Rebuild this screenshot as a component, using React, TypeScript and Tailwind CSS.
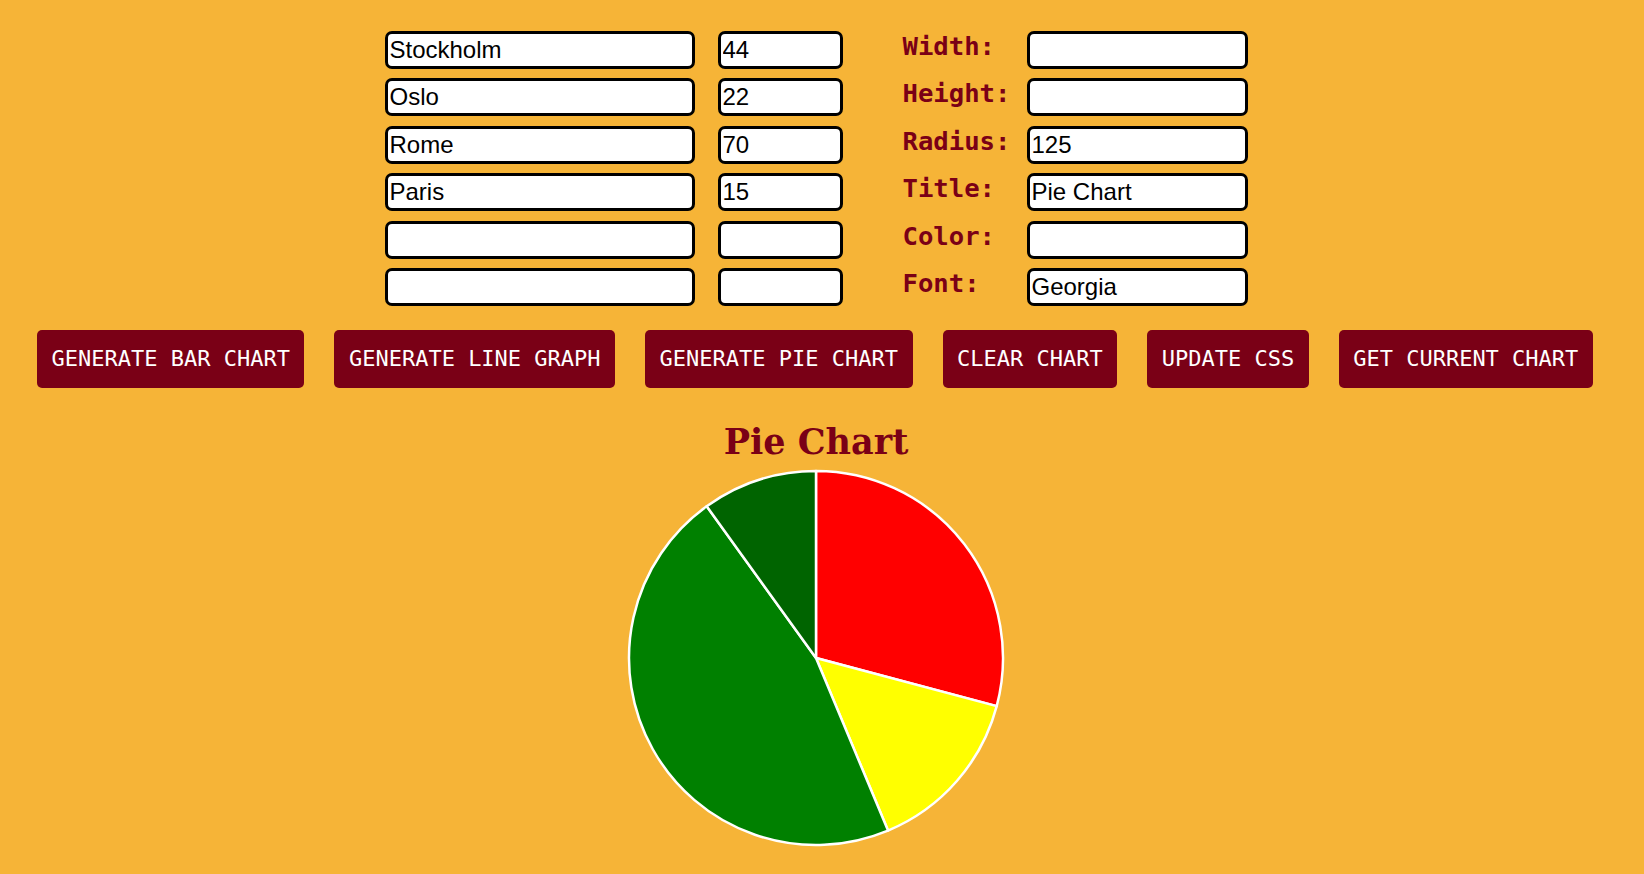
const rows = [
  { city: "Stockholm", value: "44" },
  { city: "Oslo", value: "22" },
  { city: "Rome", value: "70" },
  { city: "Paris", value: "15" },
  { city: "", value: "" },
  { city: "", value: "" },
];

const settings = [
  { label: "Width:", value: "" },
  { label: "Height:", value: "" },
  { label: "Radius:", value: "125" },
  { label: "Title:", value: "Pie Chart" },
  { label: "Color:", value: "" },
  { label: "Font:", value: "Georgia" },
];

const buttons = [
  "GENERATE BAR CHART",
  "GENERATE LINE GRAPH",
  "GENERATE PIE CHART",
  "CLEAR CHART",
  "UPDATE CSS",
  "GET CURRENT CHART",
];

const slices = [
  { value: 44, color: "#ff0000" },
  { value: 22, color: "#ffff00" },
  { value: 70, color: "#008000" },
  { value: 15, color: "#006400" },
];

const inputClass =
  "h-[38px] rounded-[7px] border-[3px] border-black bg-white px-[2px] text-[24px] text-black outline-none font-['Liberation_Sans',Arial,sans-serif]";

function PieChart() {
  const size = 380;
  const c = size / 2;
  const r = 187;
  const total = slices.reduce((s, x) => s + x.value, 0);
  let angle = 0;

  const point = (a: number) => {
    const rad = (a * Math.PI) / 180;
    return [c + r * Math.sin(rad), c - r * Math.cos(rad)];
  };

  return (
    <svg width={size} height={size} viewBox={`0 0 ${size} ${size}`}>
      {slices.map((s, i) => {
        const start = angle;
        const sweep = (s.value / total) * 360;
        angle += sweep;
        const [x1, y1] = point(start);
        const [x2, y2] = point(start + sweep);
        const large = sweep > 180 ? 1 : 0;
        return (
          <path
            key={i}
            d={`M ${c} ${c} L ${x1} ${y1} A ${r} ${r} 0 ${large} 1 ${x2} ${y2} Z`}
            fill={s.color}
            stroke="#ffffff"
            strokeWidth={2.5}
            strokeLinejoin="round"
          />
        );
      })}
    </svg>
  );
}

export default function App() {
  return (
    <div className="min-h-screen w-full bg-[#f6b437] pt-[31px]">
      {/* data + settings form */}
      <div className="flex justify-center pr-[12px]">
        <div className="flex flex-col gap-[9.4px]">
          {rows.map((row, i) => (
            <div key={i} className="flex">
              <input className={`${inputClass} w-[310px]`} defaultValue={row.city} />
              <input className={`${inputClass} ml-[23px] w-[125px]`} defaultValue={row.value} />
            </div>
          ))}
        </div>
        <div className="ml-[60px] flex flex-col gap-[9.4px]">
          {settings.map((s) => (
            <div key={s.label} className="flex items-start">
              <span className="mt-[3px] w-[124px] text-[25.6px] leading-[25px] font-bold text-[#7a0016] font-['DejaVu_Sans_Mono',monospace]">
                {s.label}
              </span>
              <input className={`${inputClass} w-[221px]`} defaultValue={s.value} />
            </div>
          ))}
        </div>
      </div>

      {/* buttons */}
      <div className="mt-[24px] flex gap-[30px] pl-[37px]">
        {buttons.map((b) => (
          <button
            key={b}
            className="h-[58px] rounded-[5px] bg-[#7a0016] px-[14.5px] text-[22px] text-white font-['DejaVu_Sans_Mono',monospace] whitespace-pre"
          >
            {b}
          </button>
        ))}
      </div>

      {/* chart */}
      <div className="flex flex-col items-center pr-[12px]">
        <h2 className="mt-[36px] text-[35px] leading-none font-bold text-[#7a0016] font-['DejaVu_Serif',Georgia,serif]">
          Pie Chart
        </h2>
        <div className="mt-[9px]">
          <PieChart />
        </div>
      </div>
    </div>
  );
}
